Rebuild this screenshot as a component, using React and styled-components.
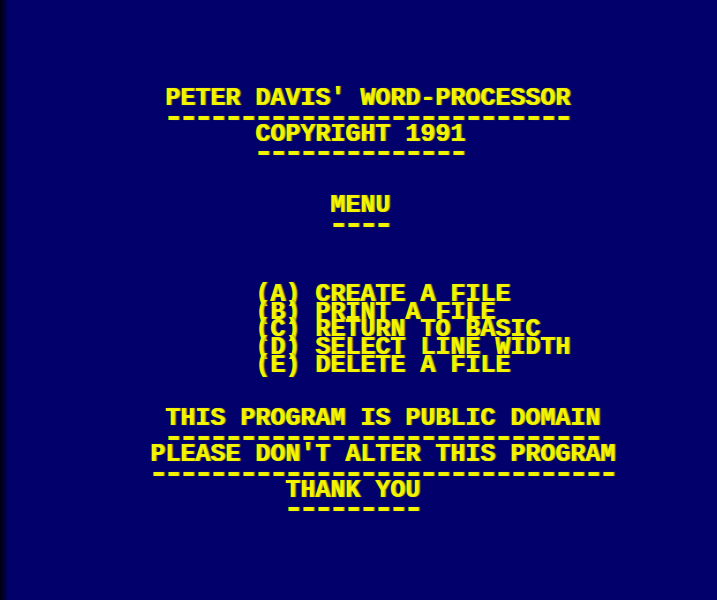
import React from "react";
import styled, { createGlobalStyle } from "styled-components";

const CELL_W = 15;
const CELL_H = 17.8;

const GlobalStyle = createGlobalStyle`
  html, body {
    margin: 0;
    padding: 0;
    background: #02006a;
  }
`;

const Screen = styled.div`
  width: 717px;
  height: 600px;
  box-sizing: border-box;
  padding-top: 1px;
  overflow: hidden;
  background: linear-gradient(to right, #000010 0px, #02006a 9px);
  font-family: "Liberation Mono", "Courier New", monospace;
  font-weight: bold;
  color: #f4f400;
`;

const Line = styled.div`
  height: ${CELL_H}px;
  line-height: ${(p) => (p.dash ? CELL_H + 3 : CELL_H)}px;
  white-space: pre;
  overflow: visible;
  padding-left: ${(p) => p.col * CELL_W - (p.dash ? 2 : 0)}px;
  font-size: ${(p) => (p.dash ? 34 : 25)}px;
  letter-spacing: ${(p) => (p.dash ? CELL_W - 34 * 0.6 : 0)}px;
  text-shadow: 1px 0 0 #c8c800, 2px 0 1px rgba(160, 160, 0, 0.6);
`;

const dashes = (n) => "-".repeat(n);

// row index -> [column, text]
const rows = {
  5: [11, "PETER DAVIS' WORD-PROCESSOR"],
  6: [11, dashes(27)],
  7: [17, "COPYRIGHT 1991"],
  8: [17, dashes(14)],
  11: [22, "MENU"],
  12: [22, dashes(4)],
  16: [17, "(A) CREATE A FILE"],
  17: [17, "(B) PRINT A FILE"],
  18: [17, "(C) RETURN TO BASIC"],
  19: [17, "(D) SELECT LINE WIDTH"],
  20: [17, "(E) DELETE A FILE"],
  23: [11, "THIS PROGRAM IS PUBLIC DOMAIN"],
  24: [11, dashes(29)],
  25: [10, "PLEASE DON'T ALTER THIS PROGRAM"],
  26: [10, dashes(31)],
  27: [19, "THANK YOU"],
  28: [19, dashes(9)],
};

export default function App() {
  const lines = [];
  for (let i = 0; i < 34; i++) {
    const r = rows[i];
    const isDash = r ? /^-+$/.test(r[1]) : false;
    lines.push(
      <Line key={i} col={r ? r[0] : 0} dash={isDash}>
        {r ? r[1] : " "}
      </Line>
    );
  }
  return (
    <>
      <GlobalStyle />
      <Screen>{lines}</Screen>
    </>
  );
}
